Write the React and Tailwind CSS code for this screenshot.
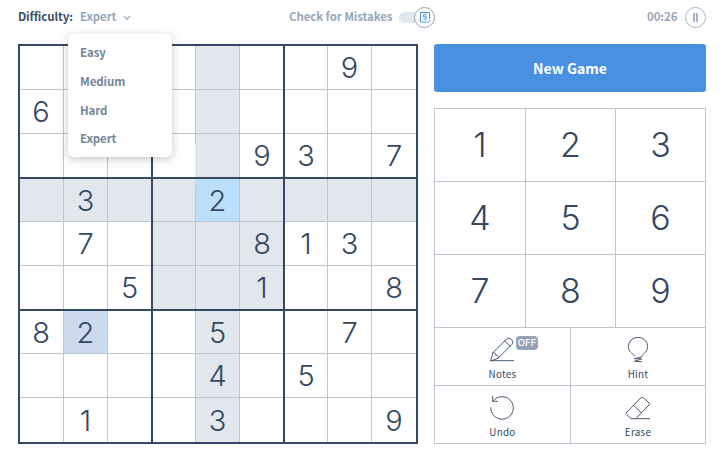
const BOARD = [
  ".......9.",
  "6........",
  ".....93.7",
  ".3..2....",
  ".7...813.",
  "..5..1..8",
  "82..5..7.",
  "....4.5..",
  ".1..3...9",
];

const LEVELS = ["Easy", "Medium", "Hard", "Expert"];
const SELECTED = { row: 3, col: 4 };
const THIRDS = [0, 1, 2];

function cellColor(row, col) {
  if (row === SELECTED.row && col === SELECTED.col) return "bg-[#bbdefb]";
  if (row === 6 && col === 1) return "bg-[#cbdbed]";
  const sameBox = row >= 3 && row < 6 && col >= 3 && col < 6;
  if (row === SELECTED.row || col === SELECTED.col || sameBox) return "bg-[#e2e7ed]";
  return "bg-white";
}

const boxCols = ["grid-cols-[43px_43px_43px]", "grid-cols-[42px_43px_43px]", "grid-cols-[42px_43px_44px]"];
const boxRows = ["grid-rows-[43px_43px_43px]", "grid-rows-[42px_43px_43px]", "grid-rows-[42px_43px_44px]"];

function Box({ band, stack }) {
  return (
    <div className={`grid gap-px bg-[#bec6d4] ${boxCols[stack]} ${boxRows[band]}`}>
      {THIRDS.flatMap((r) =>
        THIRDS.map((c) => {
          const row = band * 3 + r;
          const col = stack * 3 + c;
          const value = BOARD[row][col];
          return (
            <div
              key={`${row}-${col}`}
              className={`flex items-center justify-center text-[29px] leading-none font-light ${col === 0 ? "pr-px" : ""} ${col === 5 ? "pl-px" : ""} ${cellColor(row, col)}`}
            >
              {value === "." ? "" : value}
            </div>
          );
        })
      )}
    </div>
  );
}

function Board() {
  return (
    <div className="relative grid h-[400px] w-[400px] shrink-0 grid-cols-[131px_130px_131px] grid-rows-[131px_130px_131px] gap-[2px] border-2 border-[#344861] bg-[#344861]">
      {THIRDS.flatMap((band) => THIRDS.map((stack) => <Box key={`${band}${stack}`} band={band} stack={stack} />))}
      {/* the highlighted column runs over its left rule near the selection */}
      <div className="absolute top-[98px] left-[175px] h-[33px] w-px bg-[#e2e7ed]" />
      <div className="absolute top-[133px] left-[175px] h-[7px] w-px bg-[#bbdefb]" />
    </div>
  );
}

function Header() {
  return (
    <header className="flex h-[34px] items-center pl-[18px] text-[11.5px] leading-none font-bold tracking-[-0.1px] text-[#98a6b9]">
      <span className="w-[62px] shrink-0 text-[#3c4f67]">Difficulty:</span>
      <span className="w-[43px] shrink-0">Expert</span>
      <svg width="8" height="6" viewBox="0 0 8 6" className="mt-[2px] shrink-0" fill="none" stroke="#a9b5c6" strokeWidth="1.5">
        <path d="M.8 1 4 4.2 7.2 1" />
      </svg>
      <span className="ml-[158px] w-[110px] shrink-0 whitespace-nowrap">Check for Mistakes</span>
      <div className="flex h-[11px] w-[36px] shrink-0 items-center justify-end rounded-full bg-[#e2e7ed]">
        <div className="flex size-[21px] shrink-0 items-center justify-center rounded-full border border-[#94a3b7] bg-white">
          <svg width="13" height="13" viewBox="0 0 13 13" fill="none" stroke="#4a90e2" strokeWidth="1">
            <path d="M11.5 8V1.5h-9v9.5H8M8.5 10.5l1.3 1.3 2.6-2.8" />
            <path d="M8.8 3.8H5.5v2h2.8v2.4h-3" />
          </svg>
        </div>
      </div>
      <span className="ml-[212px] w-[38px] shrink-0">00:26</span>
      <div className="flex size-[21px] shrink-0 items-center justify-center gap-px rounded-full border border-[#a9b5c6]">
        <i className="h-[9px] w-[2px] bg-[#a9b5c6]" />
        <i className="h-[9px] w-[2px] bg-[#a9b5c6]" />
      </div>
    </header>
  );
}

function Tool({ label, className = "", children }) {
  return (
    <div className={`relative flex flex-col items-center border-[#bec6d4] text-[#344861] ${className}`}>
      <div className="flex h-[39px] items-end justify-center">{children}</div>
      <span className="font-[Noto_Sans_CJK_SC,sans-serif] text-[9.8px] leading-[14px] tracking-[0.3px]">{label}</span>
    </div>
  );
}

const stroke = { fill: "none", stroke: "#4a5c73", strokeWidth: 3, strokeLinejoin: "round", strokeLinecap: "round" };

function Pad() {
  return (
    <div className="flex h-[336px] w-[272px] flex-col border border-[#bec6d4]">
      <div className="grid grid-cols-[91px_90px_89px] grid-rows-[73px_73px_73px]">
        {[1, 2, 3, 4, 5, 6, 7, 8, 9].map((n) => (
          <div
            key={n}
            className={`flex items-center justify-center border-b border-[#bec6d4] text-[34px] leading-none font-light ${n % 3 ? "border-r" : ""}`}
          >
            {n}
          </div>
        ))}
      </div>
      <div className="grid grid-cols-[136px_134px] grid-rows-[58px_57px]">
        <Tool label="Notes" className="border-r border-b">
          <svg width="24" height="25" viewBox="180 51 72 75" className="mr-px mb-[5px]" {...stroke}>
            <path d="M182 122h69M182 122l7-24 40-40q8-7 16 0 8 8 1 15l-41 41zM189 98c8 0 9 4 8 8 5-1 9 2 8 8M224 63l17 16" />
          </svg>
          <span className="absolute top-[8px] left-[81px] h-[14px] w-[22px] rounded-[4px] bg-[#94a3b7] text-center text-[9.5px] leading-[13px] font-medium text-white">
            OFF
          </span>
        </Tool>
        <Tool label="Hint" className="border-b">
          <svg width="24" height="27" viewBox="183 48 72 81" className="mb-[4px]" {...stroke}>
            <path d="M209 108C202 98 190 96 190 80a29 28 0 0 1 58 0C248 96 234 99 230 111l-22 5 22 1-22 7 21 1" />
          </svg>
        </Tool>
        <Tool label="Undo" className="border-r">
          <svg width="24" height="26" viewBox="180 222 72 78" className="mr-px mb-[5px]" {...stroke}>
            <path d="M182 263a34 34 0 1 0 7-20M188 229v15h15" />
          </svg>
        </Tool>
        <Tool label="Erase">
          <svg width="26" height="24" viewBox="180 228 78 72" className="mb-[5px]" {...stroke}>
            <path d="M228 233q4-3 8 1l16 15q3 3 0 6l-40 41h-14l-13-13q-3-3 0-6zM206 256l23 22M212 296h42" />
          </svg>
        </Tool>
      </div>
    </div>
  );
}

export default function App() {
  return (
    <div className="relative h-[453px] w-[719px] overflow-hidden bg-white font-[Noto_Sans_CJK_SC,sans-serif] text-[#344861]">
      <Header />
      <main className="mt-[10px] flex gap-4 pl-[18px] font-[Inter,sans-serif]">
        <Board />
        <div className="flex flex-col gap-4">
          <button className="h-[48px] w-[272px] rounded-[3px] bg-[#4a90e2] font-[Noto_Sans_CJK_SC,sans-serif] text-[14px] font-bold text-white">
            New Game
          </button>
          <Pad />
        </div>
      </main>
      <ul className="absolute top-[34px] left-[68px] h-[123px] w-[104px] rounded-[5px] bg-white pt-[4px] pl-[12px] text-[11.5px] font-bold tracking-[-0.1px] text-[#76859a] shadow-[0_2px_10px_rgba(0,0,0,0.22)]">
        {LEVELS.map((level) => (
          <li key={level} className="h-[28.8px] leading-[28.8px]">
            {level}
          </li>
        ))}
      </ul>
    </div>
  );
}
